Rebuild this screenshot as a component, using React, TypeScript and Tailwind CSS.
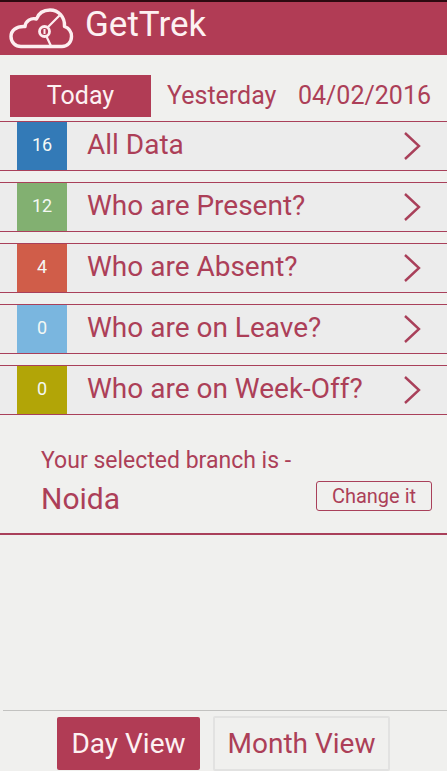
import React from "react";

type Row = { count: number; label: string; badge: string };

const rows: Row[] = [
  { count: 16, label: "All Data", badge: "bg-[#337ab7]" },
  { count: 12, label: "Who are Present?", badge: "bg-[#82b071]" },
  { count: 4, label: "Who are Absent?", badge: "bg-[#d05d49]" },
  { count: 0, label: "Who are on Leave?", badge: "bg-[#7ab6df]" },
  { count: 0, label: "Who are on Week-Off?", badge: "bg-[#b2a507]" },
];

function CloudLogo() {
  return (
    <svg viewBox="0 0 66 42" className="h-[42px] w-[66px]" fill="none" stroke="#fdeef0" aria-hidden="true">
      <path
        d="M12 38.5H53C58.500 38.500 62.500 34 62.500 28.500C62.500 23.500 59.500 20 55.500 18.500C56 9 49.500 2 41 2C34.500 2 29.500 5.500 27.500 11C22 9.500 16.500 13 16 18.500C7 18 2 22.500 2 28.500C2 34.500 6.500 38.500 12 38.500Z"
        strokeWidth="3.400"
        strokeLinejoin="round"
      />
      <circle cx="35.500" cy="23.500" r="5" strokeWidth="2.800" />
      <path d="M35.500 21V26" strokeWidth="2" />
      <path d="M39 19L50.500 7.500M37.500 28.500L42 38" strokeWidth="2.200" />
    </svg>
  );
}

function Chevron() {
  return (
    <svg viewBox="0 0 18 30" className="h-[30px] w-[18px] shrink-0" fill="none" stroke="#a9405a" strokeWidth="2.400" aria-hidden="true">
      <path d="M2 2L16 15L2 28" />
    </svg>
  );
}

export default function App() {
  return (
    <div className="flex min-h-screen flex-col bg-[#f0f0ee] font-['Roboto',sans-serif] text-[#ac3f58]">
      <header className="flex h-[55px] items-center gap-2.5 border-t-2 border-[#2c0a10] bg-[#b13c55] pl-[9px]">
        <CloudLogo />
        <h1 className="pb-2 text-[35px] leading-[40px] text-[#fdf1f2]">GetTrek</h1>
      </header>

      <main className="pt-5">
        <nav className="flex h-[42px] items-stretch gap-4 pr-4 pl-2.5 text-[25px] leading-[40px]">
          <button type="button" className="w-[141px] bg-[#b13c55] text-[#fdf1f2]">Today</button>
          <button type="button">Yesterday</button>
          <button type="button" className="ml-auto">04/02/2016</button>
        </nav>

        <ul className="flex flex-col gap-[11px] pt-1">
          {rows.map((row) => (
            <li key={row.label}>
              <button
                type="button"
                className="flex h-[50px] w-full items-center border-y border-[#a9405a] bg-[#ececec] pr-[26px] pl-[17px] text-left"
              >
                <span className={`flex w-[50px] shrink-0 justify-center self-stretch text-lg leading-[46px] text-[#f4f8f4] ${row.badge}`}>
                  {row.count}
                </span>
                <span className="grow pb-0.5 pl-5 text-[28px] leading-[40px]">{row.label}</span>
                <Chevron />
              </button>
            </li>
          ))}
        </ul>

        <section className="flex items-end justify-between border-b-2 border-[#a9405a] pt-[31px] pr-[15px] pb-[11px] pl-[41px]">
          <div>
            <p className="text-[23px] leading-[30px]">Your selected branch is -</p>
            <p className="text-[30px] leading-[46px]">Noida</p>
          </div>
          <button type="button" className="mb-[11px] h-[30px] w-[116px] shrink-0 rounded-[3px] border border-[#a9405a] text-[20px] leading-[26px]">
            Change it
          </button>
        </section>
      </main>

      <footer className="mt-auto ml-[3px] flex justify-center gap-[13px] border-t border-[#c2c2c0] pt-[5px] pr-[3px]">
        <button type="button" className="my-px h-[53px] w-[143px] rounded-[2px] bg-[#b13c55] text-[28px] leading-[40px] text-[#fdf1f2]">
          Day View
        </button>
        <button type="button" className="h-[55px] w-[177px] rounded-[2px] border-2 border-[#e2e2e1] text-[28px] leading-[40px]">
          Month View
        </button>
      </footer>
    </div>
  );
}
